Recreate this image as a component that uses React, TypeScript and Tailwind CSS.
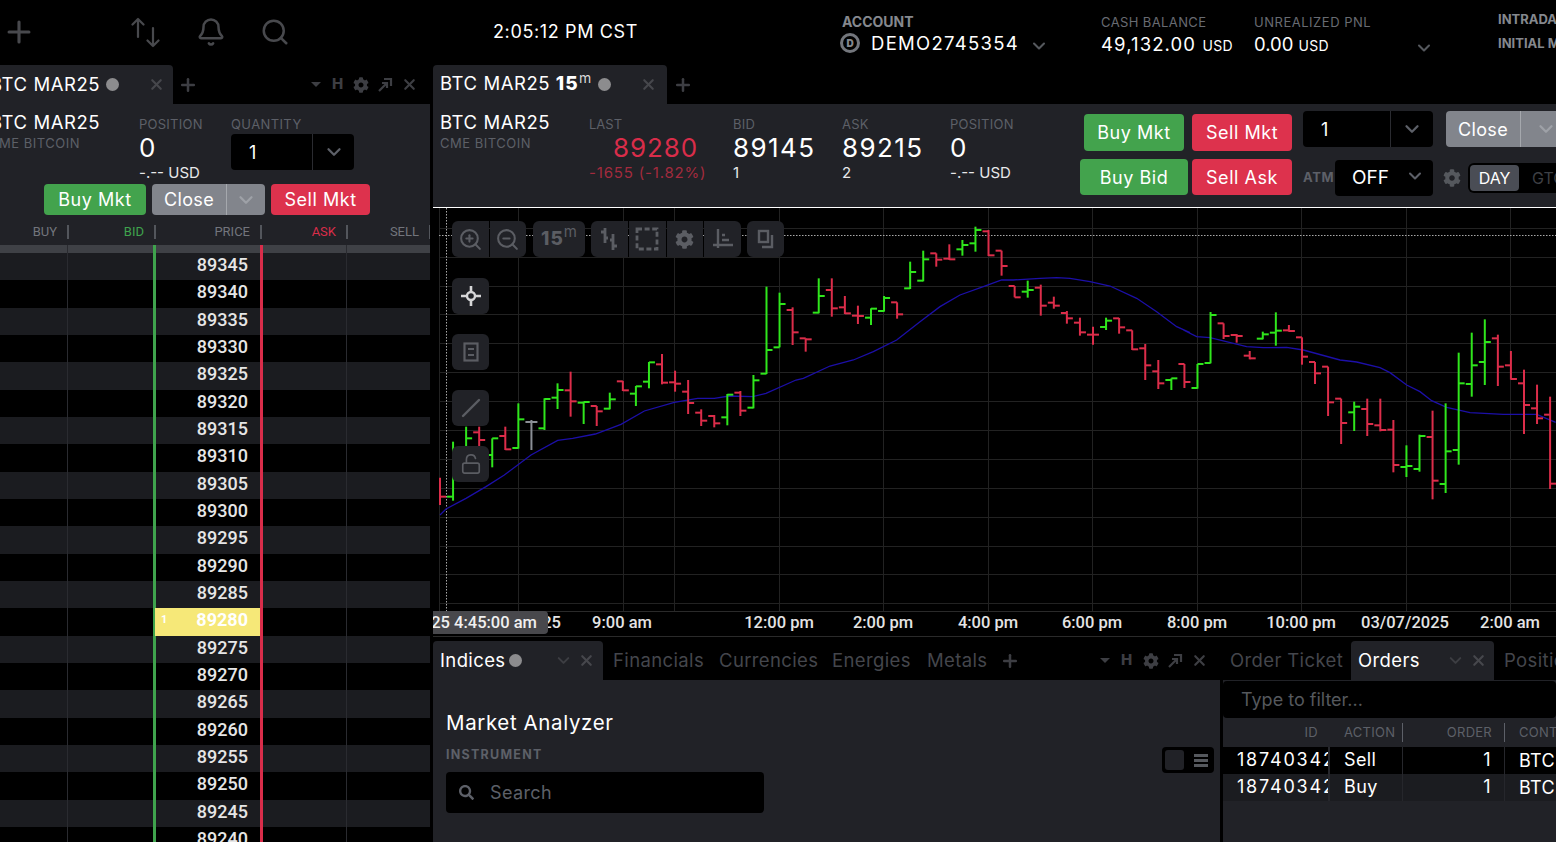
import React from "react";
import { Bell, ChevronDown, LockOpen, Plus, Search, X, ZoomIn, ZoomOut } from "lucide-react";
import { FaCog, FaSearch } from "react-icons/fa";

// [high, low, open, close, colour], y values read at 3x from y=210
type Bar = [number, number, number, number, string];

const bars: Bar[] = [
  [803, 885, 803, 860, "r"], [695, 872, 860, 750, "g"], [650, 760, 740, 685, "g"], [650, 710, 667, 690, "r"],
  [685, 772, 735, 685, "g"], [650, 720, 678, 718, "r"], [580, 716, 714, 628, "g"], [630, 720, 636, 636, "n"],
  [565, 660, 655, 567, "g"], [520, 597, 563, 540, "g"], [485, 620, 541, 574, "r"], [575, 642, 578, 576, "g"],
  [588, 648, 588, 604, "r"], [548, 598, 596, 568, "g"], [513, 543, 514, 541, "r"], [528, 588, 551, 529, "g"],
  [456, 535, 515, 457, "g"], [432, 523, 463, 518, "r"], [482, 545, 517, 521, "r"], [510, 612, 545, 579, "r"],
  [598, 648, 608, 632, "r"], [615, 652, 618, 640, "r"], [552, 646, 622, 554, "g"], [543, 618, 548, 602, "r"],
  [495, 595, 593, 511, "g"], [230, 492, 491, 420, "g"], [248, 412, 412, 282, "g"], [292, 405, 300, 367, "r"],
  [385, 425, 385, 388, "r"], [205, 310, 308, 258, "g"], [205, 320, 240, 295, "r"], [258, 312, 292, 310, "r"],
  [287, 342, 317, 318, "r"], [295, 345, 323, 296, "g"], [258, 305, 303, 264, "g"], [277, 326, 277, 313, "r"],
  [155, 237, 235, 186, "g"], [122, 214, 212, 148, "g"], [130, 170, 130, 149, "r"], [103, 150, 146, 148, "r"],
  [90, 137, 118, 105, "g"], [50, 125, 100, 60, "g"], [60, 138, 64, 136, "r"], [122, 197, 122, 168, "r"],
  [228, 262, 228, 262, "r"], [212, 263, 245, 240, "g"], [224, 317, 233, 287, "r"], [260, 296, 278, 287, "r"],
  [303, 341, 309, 325, "r"], [323, 377, 338, 367, "r"], [350, 404, 374, 374, "r"], [323, 360, 351, 332, "g"],
  [324, 371, 325, 352, "r"], [361, 420, 361, 418, "r"], [402, 510, 415, 466, "r"], [450, 537, 484, 520, "r"],
  [505, 540, 510, 505, "g"], [462, 534, 462, 516, "r"], [462, 536, 534, 462, "g"], [306, 460, 459, 315, "g"],
  [340, 387, 340, 378, "r"], [372, 398, 375, 378, "r"], [423, 448, 437, 445, "r"], [365, 388, 386, 373, "g"],
  [307, 407, 368, 362, "g"], [345, 365, 361, 363, "r"], [382, 464, 382, 440, "r"], [456, 522, 456, 490, "r"],
  [470, 618, 470, 577, "r"], [566, 702, 566, 639, "r"], [575, 663, 607, 590, "g"], [566, 678, 597, 642, "r"],
  [566, 664, 646, 660, "r"], [630, 787, 659, 765, "r"], [706, 801, 771, 768, "g"], [674, 785, 777, 678, "g"],
  [602, 868, 681, 812, "r"], [580, 849, 822, 724, "g"], [428, 764, 720, 520, "g"], [368, 560, 522, 466, "g"],
  [328, 525, 456, 396, "g"], [374, 528, 385, 470, "r"], [423, 509, 466, 507, "r"], [479, 672, 520, 585, "r"],
  [524, 642, 595, 625, "r"], [560, 837, 614, 821, "r"], [700, 800, 760, 790, "r"],
];

const barColour: Record<string, string> = { g: "#2fe61c", r: "#dc2d4a", n: "#8b8f96" };

const zoomPoints = (origin: [number, number], pts: number[][]) =>
  pts.map(([x, y]) => [origin[0] + x / 3 - 433, origin[1] + y / 3 - 208]);

const average = [
  ...zoomPoints([436, 210], [[12, 915], [30, 897], [90, 865], [150, 830], [205, 795], [285, 735], [365, 691], [410, 685], [478, 672], [555, 643], [625, 603], [715, 577], [785, 565], [835, 565], [880, 558], [950, 560], [990, 550], [1080, 510]]),
  ...zoomPoints([790, 210], [[40, 505], [120, 468], [190, 450], [250, 425], [320, 390], [390, 335], [450, 290], [510, 255], [580, 230], [635, 210], [670, 210], [750, 205], [800, 203], [840, 205], [900, 215], [960, 228], [1040, 265], [1100, 305], [1160, 350], [1200, 368]]),
  ...zoomPoints([1170, 290], [[40, 120], [80, 140], [120, 143], [230, 170], [280, 173], [350, 172], [400, 180], [510, 210], [560, 216], [630, 233], [660, 248], [710, 285], [750, 305], [785, 332], [830, 352], [900, 368], [1000, 373], [1100, 373], [1157, 397]]),
];

const gridX = [6, 85, 190, 241, 346, 450, 555, 659, 764, 868, 973, 1077];
const gridY = Array.from({ length: 14 }, (_, i) => Math.round(19.7 + 28.9 * i));
const timeLabels: [number, string][] = [
  [84, "03/06/2025"], [189, "9:00 am"], [346, "12:00 pm"], [450, "2:00 pm"], [555, "4:00 pm"],
  [659, "6:00 pm"], [764, "8:00 pm"], [868, "10:00 pm"], [972, "03/07/2025"], [1077, "2:00 am"],
];

const prices = Array.from({ length: 22 }, (_, i) => 89345 - i * 5);

function Chart() {
  return (
    <svg width="1123" height="429" className="block">
      {gridY.map((y) => (
        <line key={y} x1="6" x2="1123" y1={y + 0.5} y2={y + 0.5} stroke="#222222" />
      ))}
      {gridX.map((x) => (
        <line key={x} x1={x + 0.5} x2={x + 0.5} y1="0" y2="403" stroke="#222222" />
      ))}
      <line x1="6" x2="1123" y1="403.5" y2="403.5" stroke="#2a2a2a" />
      <line x1="0" x2="1123" y1="428.5" y2="428.5" stroke="#2a2a2a" />
      <line x1="6" x2="1123" y1="27.5" y2="27.5" stroke="#a8a8a8" strokeDasharray="1.5 1.5" />
      <line x1="13.5" x2="13.5" y1="0" y2="403" stroke="#a8a8a8" strokeDasharray="1.5 1.5" />
      <polyline
        points={average.map((p) => p.join(",")).join(" ")}
        fill="none"
        stroke="#1c0fa8"
        strokeWidth="1.3"
      />
      {bars.map(([hi, lo, open, close, c], i) => {
        const x = 7 + 13.06 * i;
        const y = (v: number) => 2 + v / 3;
        return (
          <g key={i} stroke={barColour[c]} strokeWidth="2" fill="none">
            <line x1={x} x2={x} y1={y(hi)} y2={y(lo)} />
            {i > 0 && <line x1={x - 6} x2={x} y1={y(open)} y2={y(open)} />}
            <line x1={x} x2={x + 6} y1={y(close)} y2={y(close)} />
          </g>
        );
      })}
      {timeLabels.map(([x, label]) => (
        <text
          key={label}
          x={x}
          y="420"
          textAnchor="middle"
          fill="#e4e4e4"
          className="font-['Roboto'] text-[16.5px] font-medium"
        >
          {label}
        </text>
      ))}
    </svg>
  );
}

function OrderBtn({ label, color, w, h = "h-[37px]" }: { label: string; color: string; w: string; h?: string }) {
  return (
    <div className={`${color} ${w} ${h} flex items-center justify-center rounded-[4px] text-[18px] tracking-[0.03em] text-white`}>
      {label}
    </div>
  );
}

function CloseBtn({ w, h, split }: { w: string; h: string; split: string }) {
  return (
    <div className={`${w} ${h} flex items-center rounded-[4px] bg-[#82858c] text-[18px] tracking-[0.02em] text-white`}>
      <div className={`${split} flex h-full items-center justify-center border-r border-[#a5a8ad]`}>Close</div>
      <div className="flex flex-1 justify-center">
        <ChevronDown size={22} strokeWidth={2.5} className="text-[#9ea1a7]" />
      </div>
    </div>
  );
}

function PopIcon() {
  return (
    <svg width="16" height="16" viewBox="0 0 16 16" fill="none" stroke="currentColor" strokeWidth="2.2">
      <path d="M2 14 9 7M5 6h5v5M7 2h7v7" />
    </svg>
  );
}

function TabControls() {
  return (
    <div className="flex items-center gap-[8px] text-[#3d3e43]">
      <div className="h-0 w-0 border-x-[5px] border-t-[5px] border-x-transparent border-t-[#3d3e43]" />
      <span className="ml-[3px] text-[15px] font-extrabold">H</span>
      <FaCog size={16} className="ml-[2px]" />
      <PopIcon />
      <X size={17} strokeWidth={3} />
    </div>
  );
}

function Stat({ label, value, sub, w }: { label: string; value: string; sub: string; w: string }) {
  return (
    <div className={`${w} shrink-0 pt-[12px]`}>
      <div className="h-[16px] text-[13px] leading-[16px] tracking-[0.02em] text-[#5d6068]">{label}</div>
      <div className="mt-[1px] h-[30px] text-[26px] leading-[30px] tracking-[0.055em] text-white">{value}</div>
      <div className="h-[20px] text-[15px] leading-[20px] whitespace-nowrap text-[#e8e8ea]">{sub}</div>
    </div>
  );
}

function ToolBtn({ children, w = "w-[37px]", cls = "" }: { children: React.ReactNode; w?: string; cls?: string }) {
  return <div className={`${w} ${cls} flex h-[36px] items-center justify-center bg-[#212227] text-[#5b5d63]`}>{children}</div>;
}

function SideBtn({ children, color = "text-[#5b5d63]" }: { children: React.ReactNode; color?: string }) {
  return <div className={`flex h-[36px] w-[37px] items-center justify-center rounded-[6px] bg-[#212227] ${color}`}>{children}</div>;
}

function Ladder() {
  return (
    <>
      <div className="grid h-[25px] grid-cols-[69px_87px_106px_86px_83px] bg-[#212227] font-['Roboto'] text-[13px] text-[#72757c]">
        {[["BUY", ""], ["BID", "text-[#3fa34d]"], ["PRICE", ""], ["ASK", "text-[#d92d4a]"], ["SELL", ""]].map(([label, cls]) => (
          <div key={label} className={`flex items-center justify-end pb-[1px] ${cls}`}>
            <span>{label}</span>
            <span className="ml-[10px] h-[14px] w-[2px] bg-[#53565c]" />
          </div>
        ))}
      </div>
      <div className="grid h-[8px] grid-cols-[68px_88px_107px_84px_83px] bg-[#3f4146]">
        <div className="border-r border-[#2a2b30]" />
        <div className="border-r-[3px] border-[#3fa34d]" />
        <div className="border-r-[3px] border-[#d92d4a]" />
        <div className="border-r border-[#2a2b30]" />
        <div />
      </div>
      {prices.map((p, i) => (
        <div
          key={p}
          className={`grid h-[27.33px] grid-cols-[68px_88px_107px_84px_83px] ${i % 2 === 0 ? "bg-[#1b1c20]" : "bg-black"}`}
        >
          <div className="border-r border-[#2a2b30]" />
          <div className="border-r-[3px] border-[#3fa34d]" />
          {p === 89280 ? (
            <div className="ml-[-1px] flex items-center justify-between border-r-[3px] border-[#d92d4a] bg-[#f6e878] pb-[3px] pl-[6px] pr-[12px] font-['Roboto'] text-[18px] leading-[20px] font-bold text-white">
              <span className="text-[11px]">1</span>
              {p}
            </div>
          ) : (
            <div className="flex items-center justify-end border-r-[3px] border-[#d92d4a] pb-[3px] pr-[12px] font-['Roboto'] text-[18px] leading-[20px] font-medium text-[#e6e6e6]">
              {p}
            </div>
          )}
          <div className="border-r border-[#2a2b30]" />
          <div />
        </div>
      ))}
    </>
  );
}

export default function App() {
  return (
    <div className="h-[842px] w-[1556px] overflow-hidden bg-black font-['Inter',sans-serif] text-white">
      {/* top bar */}
      <div className="flex h-[65px]">
        <div className="flex h-full w-[400px] shrink-0 items-start pt-[15px] text-[#48494d]">
          <Plus size={34} strokeWidth={2.2} className="ml-[2px]" />
          <svg width="30" height="32" viewBox="0 0 30 32" fill="none" stroke="currentColor" strokeWidth="2.2" strokeLinecap="round" strokeLinejoin="round" className="ml-[95px] mt-[1px]">
            <path d="M7 21V3M1.5 8.5 7 3l5.5 5.5M22 12v18M16.5 24.5 22 30l5.5-5.5" />
          </svg>
          <Bell size={30} strokeWidth={2} className="ml-[35px] mt-[2px]" />
          <Search size={30} strokeWidth={2} className="ml-[34px] mt-[2px]" />
        </div>
        <div className="w-[442px] shrink-0 pl-[93px] pt-[20px] text-[18px] leading-[24px] tracking-[0.035em]">2:05:12 PM CST</div>
        <div className="w-[259px] shrink-0 pt-[14px]">
          <div className="text-[14px] leading-[16px] font-bold text-[#85888e]">ACCOUNT</div>
          <div className="flex items-center text-[#85888e]">
            <div className="ml-[-2px] flex h-[20px] w-[20px] items-center justify-center rounded-full border-[3px] border-[#73767c] text-[10px] font-black">D</div>
            <span className="ml-[11px] text-[18.5px] leading-[26px] tracking-[0.07em] text-white">DEMO2745354</span>
            <ChevronDown size={20} strokeWidth={2.5} className="ml-[10px] mt-[5px] text-[#55585d]" />
          </div>
        </div>
        <div className="w-[153px] shrink-0 pt-[14px]">
          <div className="text-[13px] leading-[16px] tracking-[0.03em] text-[#686b72]">CASH BALANCE</div>
          <div className="whitespace-nowrap text-[18.5px] leading-[28px] tracking-[0.06em]">
            49,132.00 <span className="text-[14px] tracking-[0.02em]">USD</span>
          </div>
        </div>
        <div className="w-[244px] shrink-0 pt-[14px]">
          <div className="text-[13px] leading-[16px] tracking-[0.04em] text-[#686b72]">UNREALIZED PNL</div>
          <div className="flex">
            <div className="w-[160px] text-[18.5px] leading-[28px]">
              0.00 <span className="text-[14px] tracking-[0.02em]">USD</span>
            </div>
            <ChevronDown size={20} strokeWidth={2.5} className="mt-[8px] text-[#55585d]" />
          </div>
        </div>
        <div className="whitespace-nowrap pt-[11px] text-[13px] leading-[16px] font-bold text-[#85888e]">
          <div>INTRADAY</div>
          <div className="mt-[8px]">INITIAL MARGIN</div>
        </div>
      </div>

      <div className="flex h-[777px] gap-[3px]">
        {/* left panel */}
        <div className="w-[430px] shrink-0 overflow-hidden">
          <div className="flex h-[39px] items-center">
            <div className="flex h-full w-[173px] items-center rounded-tr-[4px] bg-[#212227] text-[18.5px]">
              <span className="ml-[-10px] whitespace-nowrap tracking-[0.03em]">BTC MAR25</span>
              <span className="ml-[6px] h-[13px] w-[13px] rounded-full bg-[#8c8c8e]" />
              <X size={17} strokeWidth={3} className="ml-[29px] text-[#46474c]" />
            </div>
            <Plus size={20} strokeWidth={3} className="ml-[5px] text-[#3d3e43]" />
            <div className="ml-[113px]"><TabControls /></div>
          </div>
          <div className="h-[738px] overflow-hidden bg-[#212227]">
            <div className="flex h-[80px]">
              <div className="w-[139px] shrink-0 overflow-hidden pt-[6px]">
                <div className="ml-[-10px] h-[24px] whitespace-nowrap text-[18.5px] leading-[24px] tracking-[0.03em]">BTC MAR25</div>
                <div className="ml-[-11px] mt-[1px] h-[16px] whitespace-nowrap text-[13px] leading-[16px] tracking-[0.04em] text-[#5d6068]">CME BITCOIN</div>
              </div>
              <Stat w="w-[92px]" label="POSITION" value="0" sub="-.-- USD" />
              <div className="w-[123px] pt-[12px]">
                <div className="h-[16px] text-[13px] leading-[16px] tracking-[0.03em] text-[#5d6068]">QUANTITY</div>
                <div className="mt-[2px] flex h-[36px] items-center rounded-[4px] bg-black">
                  <span className="w-[81px] pl-[18px] text-[18px]">1</span>
                  <div className="flex h-full flex-1 items-center justify-center border-l border-[#2a2b30]">
                    <ChevronDown size={22} strokeWidth={2.5} className="text-[#5d6068]" />
                  </div>
                </div>
              </div>
            </div>
            <div className="flex gap-[6px] pl-[44px]">
              <OrderBtn label="Buy Mkt" color="bg-[#43a34d]" w="w-[102px]" h="h-[31px]" />
              <CloseBtn w="w-[113px]" h="h-[31px]" split="w-[75px]" />
              <OrderBtn label="Sell Mkt" color="bg-[#dd324d]" w="w-[99px]" h="h-[31px]" />
            </div>
            <div className="mt-[5px]"><Ladder /></div>
          </div>
        </div>

        {/* right side */}
        <div className="flex min-w-0 flex-1 flex-col">
          <div className="flex h-[39px] items-center">
            <div className="flex h-full w-[234px] items-center rounded-t-[4px] bg-[#212227] pl-[7px] text-[18.5px]">
              <span className="whitespace-nowrap tracking-[0.03em]">
                BTC MAR25 <span className="text-[19px] font-extrabold tracking-[0.06em]">15</span>
                <sup className="text-[14px] tracking-normal text-[#d8d8d8]">m</sup>
              </span>
              <span className="ml-[7px] h-[13px] w-[13px] rounded-full bg-[#8c8c8e]" />
              <X size={17} strokeWidth={3} className="ml-[29px] text-[#46474c]" />
            </div>
            <Plus size={20} strokeWidth={3} className="ml-[6px] text-[#3d3e43]" />
          </div>

          {/* chart header */}
          <div className="flex h-[104px] shrink-0 overflow-hidden border-b border-white bg-[#212227] pl-[7px]">
            <div className="w-[149px] shrink-0 pt-[6px]">
              <div className="h-[24px] text-[18.5px] leading-[24px] tracking-[0.03em]">BTC MAR25</div>
              <div className="mt-[1px] h-[16px] text-[13px] leading-[16px] tracking-[0.04em] text-[#5d6068]">CME BITCOIN</div>
            </div>
            <div className="w-[144px] shrink-0 pt-[12px]">
              <div className="h-[16px] text-[13px] leading-[16px] text-[#5d6068]">LAST</div>
              <div className="mt-[1px] h-[30px] w-[109px] text-right text-[26px] leading-[30px] tracking-[0.035em] text-[#d92d4a]">89280</div>
              <div className="h-[20px] whitespace-nowrap text-[15px] leading-[20px] tracking-[0.055em] text-[#a32b3e]">-1655 (-1.82%)</div>
            </div>
            <Stat w="w-[109px]" label="BID" value="89145" sub="1" />
            <Stat w="w-[108px]" label="ASK" value="89215" sub="2" />
            <Stat w="w-[130px]" label="POSITION" value="0" sub="-.-- USD" />
            <div className="flex w-[212px] shrink-0 flex-col items-end gap-[8px] pt-[10px]">
              <div className="flex gap-[8px]">
                <OrderBtn label="Buy Mkt" color="bg-[#43a34d]" w="w-[100px]" />
                <OrderBtn label="Sell Mkt" color="bg-[#dd324d]" w="w-[100px]" />
              </div>
              <div className="flex gap-[4px]">
                <OrderBtn label="Buy Bid" color="bg-[#43a34d]" w="w-[108px]" h="h-[36px]" />
                <OrderBtn label="Sell Ask" color="bg-[#dd324d]" w="w-[100px]" h="h-[36px]" />
              </div>
            </div>
            <div className="ml-[11px] flex shrink-0 flex-col gap-[13px] pt-[7px]">
              <div className="flex">
                <div className="flex h-[36px] w-[130px] items-center rounded-[4px] bg-black">
                  <span className="w-[87px] pl-[18px] text-[18px]">1</span>
                  <div className="flex h-full flex-1 items-center justify-center border-l border-[#2a2b30]">
                    <ChevronDown size={22} strokeWidth={2.5} className="text-[#5d6068]" />
                  </div>
                </div>
                <div className="ml-[13px]"><CloseBtn w="w-[125px]" h="h-[36px]" split="w-[75px]" /></div>
              </div>
              <div className="flex items-center">
                <span className="w-[32px] text-[13px] font-bold tracking-[0.05em] text-[#5d6068]">ATM</span>
                <div className="flex h-[36px] w-[98px] items-center rounded-[4px] bg-black pl-[17px] text-[19px]">
                  <span className="w-[53px]">OFF</span>
                  <ChevronDown size={20} strokeWidth={2.5} className="mt-[-4px] text-[#5d6068]" />
                </div>
                <FaCog size={18} className="ml-[10px] text-[#55585d]" />
                <div className="ml-[7px] flex h-[30px] w-[120px] items-center rounded-[6px] bg-black pl-[2px] text-[16px]">
                  <div className="flex h-[26px] w-[49px] items-center justify-center rounded-[4px] bg-[#4a4d55]">DAY</div>
                  <span className="ml-[13px] text-[#3d3f44]">GTC</span>
                </div>
              </div>
            </div>
          </div>

          {/* chart */}
          <div className="relative h-[429px] shrink-0 overflow-hidden">
            <Chart />
            <div className="absolute top-[13px] left-[19px] flex">
              <div className="flex gap-px overflow-hidden rounded-[6px]">
                <ToolBtn w="w-[36.5px]"><ZoomIn size={25} strokeWidth={2} /></ToolBtn>
                <ToolBtn w="w-[36.5px]"><ZoomOut size={25} strokeWidth={2} /></ToolBtn>
              </div>
              <ToolBtn w="w-[52px]" cls="ml-[7px] rounded-[6px]">
                <span className="text-[19px] font-extrabold tracking-[0.05em]">15</span>
                <sup className="text-[15px]">m</sup>
              </ToolBtn>
              <div className="ml-[6px] flex gap-px overflow-hidden rounded-[6px]">
                <ToolBtn w="w-[36.75px]">
                  <svg width="18" height="24" viewBox="0 0 18 24" fill="none" stroke="currentColor" strokeWidth="2.8">
                    <path d="M5 1v15M5 5H1M5 11h3M13 7v16M13 13h-3M13 19h4" />
                  </svg>
                </ToolBtn>
                <ToolBtn w="w-[36.75px]">
                  <svg width="24" height="24" viewBox="0 0 24 24" fill="none" stroke="currentColor" strokeWidth="2.8" strokeDasharray="5 2.6">
                    <rect x="2" y="2" width="20" height="20" />
                  </svg>
                </ToolBtn>
                <ToolBtn w="w-[36.75px]"><FaCog size={19} /></ToolBtn>
                <ToolBtn w="w-[36.75px]">
                  <svg width="24" height="24" viewBox="0 0 24 24" fill="none" stroke="currentColor" strokeWidth="2.4">
                    <path d="M7 2v19M2 18h20M11 8h3M11 13h7" />
                  </svg>
                </ToolBtn>
              </div>
              <ToolBtn cls="ml-[6px] rounded-[6px]">
                <svg width="18" height="20" viewBox="0 0 18 20" fill="none" stroke="currentColor" strokeWidth="2.4">
                  <rect x="2" y="2" width="9" height="11" />
                  <path d="M15 6v12H5" />
                </svg>
              </ToolBtn>
            </div>
            <div className="absolute top-[70px] left-[19px] flex flex-col gap-[20px]">
              <SideBtn color="text-[#d6d6d8]">
                <svg width="22" height="22" viewBox="0 0 22 22" fill="none" stroke="currentColor">
                  <circle cx="11" cy="11" r="4" strokeWidth="2.4" />
                  <path d="M11 1v6M11 15v6M1 11h6M15 11h6" strokeWidth="2.6" />
                </svg>
              </SideBtn>
              <SideBtn>
                <svg width="16" height="20" viewBox="0 0 16 20" fill="none" stroke="currentColor" strokeWidth="2.2">
                  <rect x="1.5" y="1.5" width="13" height="17" />
                  <path d="M5 7h6M5 13h6" />
                </svg>
              </SideBtn>
              <SideBtn>
                <svg width="20" height="20" viewBox="0 0 20 20" stroke="currentColor" strokeWidth="2.4" strokeLinecap="round">
                  <path d="M2 18 18 2" />
                </svg>
              </SideBtn>
              <SideBtn><LockOpen size={22} strokeWidth={1.8} /></SideBtn>
            </div>
            <div className="absolute top-[403px] left-0 flex h-[23px] w-[115px] items-center justify-end overflow-hidden rounded-r-[4px] bg-[#48484c] pt-[1px] pr-[11px] font-['Roboto'] text-[16.5px] font-medium whitespace-nowrap text-[#f0f0f0]">
              25 4:45:00 am
            </div>
          </div>

          {/* bottom panels */}
          <div className="mt-[4px] flex min-h-0 flex-1 gap-[3px]">
            <div className="flex w-[787px] shrink-0 flex-col">
              <div className="flex h-[39px] items-center text-[18.5px] tracking-[0.02em] text-[#44464c]">
                <div className="flex h-full w-[170px] shrink-0 items-center rounded-t-[4px] bg-[#212227] pl-[7px] text-white">
                  <span>Indices</span>
                  <span className="ml-[4px] h-[13px] w-[13px] rounded-full bg-[#8c8c8e]" />
                  <ChevronDown size={19} strokeWidth={2.5} className="ml-[32px] text-[#3d3e43]" />
                  <X size={17} strokeWidth={3} className="ml-[5px] text-[#46474c]" />
                </div>
                <span className="ml-[10px] w-[106px] shrink-0">Financials</span>
                <span className="w-[113px] shrink-0">Currencies</span>
                <span className="w-[95px] shrink-0">Energies</span>
                <span className="w-[73px] shrink-0">Metals</span>
                <Plus size={20} strokeWidth={3} className="shrink-0 text-[#3d3e43]" />
                <div className="ml-[80px]"><TabControls /></div>
              </div>
              <div className="relative flex-1 bg-[#212227] pl-[13px] pt-[29px]">
                <div className="h-[28px] text-[20.5px] leading-[28px] tracking-[0.03em]">Market Analyzer</div>
                <div className="mt-[10px] h-[16px] text-[12.5px] leading-[16px] font-bold tracking-[0.1em] text-[#5d6068]">INSTRUMENT</div>
                <div className="mt-[9px] flex h-[41px] w-[318px] items-center rounded-[4px] bg-black pl-[13px] text-[18px] tracking-[0.02em] text-[#5d6068]">
                  <FaSearch size={15} />
                  <span className="ml-[16px]">Search</span>
                </div>
                <div className="absolute top-[67px] left-[729px] flex h-[26px] w-[52px] items-center rounded-[4px] bg-black pl-[3px]">
                  <div className="h-[20px] w-[19px] rounded-[3px] bg-[#212227]" />
                  <div className="ml-[10px] flex flex-col gap-[2px]">
                    <div className="h-[3px] w-[14px] bg-[#55585d]" />
                    <div className="h-[3px] w-[14px] bg-[#55585d]" />
                    <div className="h-[3px] w-[14px] bg-[#55585d]" />
                  </div>
                </div>
              </div>
            </div>
            <div className="flex min-w-0 flex-1 flex-col">
              <div className="flex h-[39px] items-center overflow-hidden text-[18.5px] tracking-[0.02em] text-[#44464c]">
                <span className="ml-[7px] w-[121px] shrink-0 whitespace-nowrap">Order Ticket</span>
                <div className="flex h-full w-[143px] shrink-0 items-center rounded-t-[4px] bg-[#212227] pl-[7px] text-white">
                  <span className="w-[88px]">Orders</span>
                  <ChevronDown size={19} strokeWidth={2.5} className="text-[#3d3e43]" />
                  <X size={17} strokeWidth={3} className="ml-[5px] text-[#46474c]" />
                </div>
                <span className="ml-[10px] shrink-0 whitespace-nowrap">Positions</span>
              </div>
              <div className="flex-1 overflow-hidden bg-[#212227]">
                <div className="mt-px flex h-[37px] items-center rounded-[4px] bg-black pl-[18px] text-[18px] text-[#55585d]">Type to filter...</div>
                <div className="grid h-[29px] grid-cols-[107px_73px_102px_1fr] items-center whitespace-nowrap text-[13px] tracking-[0.02em] text-[#5d6068]">
                  <div className="flex items-center justify-end pr-[12px]">ID</div>
                  <div className="flex items-center pl-[14px]">
                    <span className="w-[58px]">ACTION</span>
                    <span className="h-[19px] w-px bg-[#5d6068]" />
                  </div>
                  <div className="flex items-center justify-end">
                    <span className="mr-[12px]">ORDER</span>
                    <span className="h-[19px] w-px bg-[#5d6068]" />
                  </div>
                  <div className="pl-[14px]">CONT</div>
                </div>
                {[["Sell", "bg-black"], ["Buy", "bg-[#1b1c20]"]].map(([action, bg]) => (
                  <div key={action} className={`grid h-[27px] grid-cols-[107px_73px_102px_1fr] items-center text-[18px] tracking-[0.02em] ${bg}`}>
                    <div className="h-full overflow-hidden border-r-[2px] border-[#26272c] pl-[14px] leading-[26px] tracking-[0.1em]">18740342</div>
                    <div className="h-full border-r border-[#26272c] pl-[14px] leading-[26px]">{action}</div>
                    <div className="h-full border-r border-[#26272c] pr-[13px] text-right leading-[26px]">1</div>
                    <div className="pl-[14px] leading-[26px]">BTC</div>
                  </div>
                ))}
              </div>
            </div>
          </div>
        </div>
      </div>
    </div>
  );
}
